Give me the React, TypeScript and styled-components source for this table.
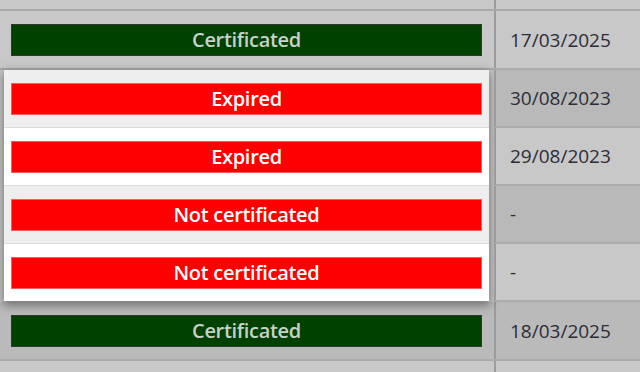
import React from "react";
import styled, { createGlobalStyle } from "styled-components";

const Global = createGlobalStyle`
  html, body { margin: 0; padding: 0; }
  body {
    background: #c8c8c8;
    font-family: "Open Sans", "Noto Sans", sans-serif;
    overflow: hidden;
  }
`;

const Table = styled.div`
  width: 640px;
  height: 372px;
  overflow: hidden;
  display: flex;
  flex-direction: column;
`;

const TopStrip = styled.div`
  display: grid;
  grid-template-columns: 494px 1fr;
  height: 9px;
  flex: none;
  border-bottom: 2px solid #a9a9a9;
  background: #c9c9c9;
`;

const Row = styled.div<{ $bg: string }>`
  display: grid;
  grid-template-columns: 494px 1fr;
  height: 57px;
  flex: none;
  border-bottom: 2px solid #ababab;
  background: ${(p) => p.$bg};
`;

const StatusCell = styled.div`
  display: flex;
  align-items: center;
  padding: 0 12px 0 11px;
`;

const DateCell = styled.div<{ $bg?: string }>`
  display: flex;
  align-items: center;
  padding-left: 14px;
  border-left: 2px solid #9c9c9c;
  background: ${(p) => p.$bg ?? "transparent"};
  color: #2c2c38;
  font-size: 19px;
  font-weight: 400;
`;

const Badge = styled.div<{ $kind: "ok" | "bad" }>`
  flex: 1;
  height: 30px;
  display: flex;
  align-items: center;
  justify-content: center;
  font-size: 20px;
  font-weight: 600;
  letter-spacing: -0.3px;
  background: ${(p) => (p.$kind === "ok" ? "#004100" : "#ff0000")};
  color: ${(p) => (p.$kind === "ok" ? "#c6d2c6" : "#ffffff")};
  border: 1px solid ${(p) => (p.$kind === "ok" ? "#2e3b2e" : "#ff5a5a")};
`;

const Group = styled.div`
  display: grid;
  grid-template-columns: 494px 1fr;
  flex: none;
  position: relative;
  z-index: 1;
`;

const PopupSlot = styled.div`
  padding: 0 5px 0 4px;
`;

const Popup = styled.div`
  display: flex;
  flex-direction: column;
  background: #ffffff;
  box-shadow: 0 3px 9px 1px rgba(0, 0, 0, 0.42);
`;

const PopupRow = styled.div<{ $alt: boolean }>`
  display: flex;
  align-items: center;
  height: 57px;
  padding: 0 7px;
  background: ${(p) => (p.$alt ? "#eeeeee" : "#ffffff")};
  & + & {
    border-top: 1px solid #dcdcdc;
  }
`;

const DateColumn = styled.div`
  display: flex;
  flex-direction: column;
`;

const GroupDate = styled(DateCell)`
  height: 56px;
  border-bottom: 2px solid #ababab;
`;

const lifted = [
  { status: "Expired", date: "30/08/2023", bg: "#b9b9b9" },
  { status: "Expired", date: "29/08/2023", bg: "#c8c8c8" },
  { status: "Not certificated", date: "-", bg: "#b9b9b9" },
  { status: "Not certificated", date: "-", bg: "#c8c8c8" },
];

export default function App() {
  return (
    <>
      <Global />
      <Table>
        <TopStrip>
          <div />
          <DateCell />
        </TopStrip>
        <Row $bg="#c8c8c8">
          <StatusCell>
            <Badge $kind="ok">Certificated</Badge>
          </StatusCell>
          <DateCell>17/03/2025</DateCell>
        </Row>
        <Group>
          <PopupSlot>
            <Popup>
              {lifted.map((r, i) => (
                <PopupRow key={i} $alt={i % 2 === 0}>
                  <Badge $kind="bad">{r.status}</Badge>
                </PopupRow>
              ))}
            </Popup>
          </PopupSlot>
          <DateColumn>
            {lifted.map((r, i) => (
              <GroupDate key={i} $bg={r.bg}>
                {r.date}
              </GroupDate>
            ))}
          </DateColumn>
        </Group>
        <Row $bg="#bababa">
          <StatusCell>
            <Badge $kind="ok">Certificated</Badge>
          </StatusCell>
          <DateCell>18/03/2025</DateCell>
        </Row>
        <Row $bg="#c8c8c8">
          <StatusCell />
          <DateCell />
        </Row>
      </Table>
    </>
  );
}
